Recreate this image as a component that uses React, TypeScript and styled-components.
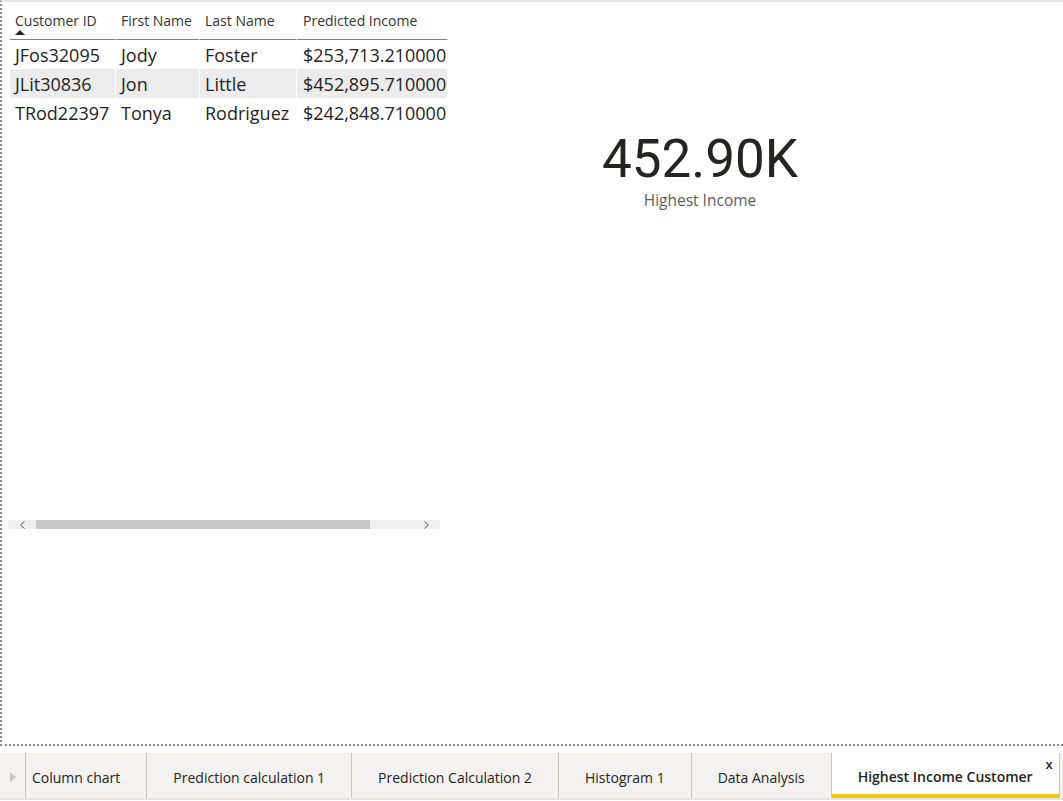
import React from "react";
import styled, { createGlobalStyle } from "styled-components";

const Global = createGlobalStyle`
  html, body { margin: 0; padding: 0; background: #ffffff; overflow: hidden; }
  body { font-family: "Open Sans", "Noto Sans", sans-serif; color: #252423; }
  * { box-sizing: border-box; }
`;

const Page = styled.div`
  width: 1063px;
  height: 801px;
  display: flex;
  flex-direction: column;
`;

const Canvas = styled.div`
  height: 746px;
  flex-shrink: 0;
  border-top: 2px solid #e6e6e6;
  border-left: 2px dotted #8a8a8a;
  border-bottom: 2px dotted #8a8a8a;
  display: flex;
  padding: 6px 0 0 8px;
`;

const TableVisual = styled.div`
  width: 438px;
  display: flex;
  flex-direction: column;
`;

const TableArea = styled.div`
  height: 504px;
  overflow: hidden;
  width: 438px;
`;

const Row = styled.div<{ $shade?: boolean }>`
  display: grid;
  grid-template-columns: 106px 84px 97px 151px;
  height: 29px;
  background: ${(p) => (p.$shade ? "#ececec" : "transparent")};
`;

const HeadRow = styled.div`
  display: grid;
  grid-template-columns: 106px 84px 97px 151px;
  height: 32px;
`;

const HeadCell = styled.div<{ $pad?: number }>`
  position: relative;
  border-right: 1px solid #ffffff;
  border-bottom: 1px solid #3b8fe0;
  padding: 3px 0 0 ${(p) => p.$pad ?? 5}px;
  font-size: 14px;
  color: #333333;
  white-space: nowrap;
  overflow: hidden;
`;

const Cell = styled.div<{ $pad?: number }>`
  border-right: 1px solid #ffffff;
  padding: 1px 0 0 ${(p) => p.$pad ?? 5}px;
  font-size: 18px;
  line-height: 28px;
  color: #252423;
  white-space: nowrap;
  overflow: hidden;
`;

const SortArrow = styled.span`
  position: absolute;
  left: 5px;
  top: 22px;
  width: 0;
  height: 0;
  border-left: 5px solid transparent;
  border-right: 5px solid transparent;
  border-bottom: 5px solid #252423;
`;

const ScrollBar = styled.div`
  margin-top: 8px;
  margin-left: -2px;
  width: 432px;
  height: 9px;
  background: #f0f0f0;
  display: flex;
  align-items: center;
`;

const ScrollArrow = styled.div`
  width: 28px;
  display: flex;
  justify-content: center;
  align-items: center;
`;

const Thumb = styled.div`
  width: 334px;
  height: 9px;
  background: #c8c8c8;
`;

const ThumbSpacer = styled.div`
  flex: 1;
`;

const Kpi = styled.div`
  width: 504px;
  display: flex;
  flex-direction: column;
  align-items: center;
  padding-top: 121px;
`;

const KpiValue = styled.div`
  font-family: Roboto, "DejaVu Sans", sans-serif;
  font-size: 53px;
  line-height: 60px;
  color: #252423;
`;

const KpiLabel = styled.div`
  font-size: 15.5px;
  color: #605e5c;
  margin-top: 0px;
`;

const TabBar = styled.div`
  margin-top: 7px;
  height: 47px;
  flex-shrink: 0;
  background: #f3f2f1;
  border-bottom: 2px solid #e6e4e2;
  display: flex;
  align-items: stretch;
`;

const Scroller = styled.div`
  width: 26px;
  flex-shrink: 0;
  border-right: 1px solid #c8c6c4;
  display: flex;
  align-items: center;
  justify-content: center;
  padding-top: 3px;
`;

const Tab = styled.div<{ $active?: boolean; $first?: boolean }>`
  position: relative;
  flex-shrink: 0;
  display: flex;
  align-items: center;
  padding: 3px 26px 0 ${(p) => (p.$first ? 6 : 26)}px;
  border-right: 1px solid #c8c6c4;
  background: ${(p) => (p.$active ? "#ffffff" : "transparent")};
  font-size: 14px;
  font-weight: ${(p) => (p.$active ? 600 : 400)};
  color: #252423;
  white-space: nowrap;
  ${(p) => (p.$active ? "border-bottom: 4px solid #f2c811; padding-top: 6px; padding-right: 26px;" : "")}
`;

const Close = styled.span`
  position: absolute;
  right: 6px;
  top: 2px;
  font-size: 13px;
  font-weight: 600;
  color: #252423;
`;

const rows = [
  ["JFos32095", "Jody", "Foster", "$253,713.2100000000"],
  ["JLit30836", "Jon", "Little", "$452,895.7100000000"],
  ["TRod22397", "Tonya", "Rodriguez", "$242,848.7100000000"],
];

const tabs = [
  "Column chart",
  "Prediction calculation 1",
  "Prediction Calculation 2",
  "Histogram 1",
  "Data Analysis",
];

export default function App() {
  return (
    <Page>
      <Global />
      <Canvas>
        <TableVisual>
          <TableArea>
            <HeadRow>
              <HeadCell>
                Customer ID
                <SortArrow />
              </HeadCell>
              <HeadCell>First Name</HeadCell>
              <HeadCell>Last Name</HeadCell>
              <HeadCell $pad={6}>Predicted Income</HeadCell>
            </HeadRow>
            {rows.map((r, i) => (
              <Row key={r[0]} $shade={i === 1}>
                <Cell>{r[0]}</Cell>
                <Cell>{r[1]}</Cell>
                <Cell>{r[2]}</Cell>
                <Cell $pad={6}>{r[3]}</Cell>
              </Row>
            ))}
          </TableArea>
          <ScrollBar>
            <ScrollArrow>
              <svg width="7" height="8" viewBox="0 0 7 8">
                <path d="M5.5 0.5 L1.5 4 L5.5 7.5" fill="none" stroke="#555" strokeWidth="1" />
              </svg>
            </ScrollArrow>
            <Thumb />
            <ThumbSpacer />
            <ScrollArrow>
              <svg width="7" height="8" viewBox="0 0 7 8">
                <path d="M1.5 0.5 L5.5 4 L1.5 7.5" fill="none" stroke="#555" strokeWidth="1" />
              </svg>
            </ScrollArrow>
          </ScrollBar>
        </TableVisual>
        <Kpi>
          <KpiValue>452.90K</KpiValue>
          <KpiLabel>Highest Income</KpiLabel>
        </Kpi>
      </Canvas>
      <TabBar>
        <Scroller>
          <svg width="6" height="10" viewBox="0 0 6 10">
            <path d="M0 0 L6 5 L0 10 Z" fill="#c8c6c4" />
          </svg>
        </Scroller>
        {tabs.map((t, i) => (
          <Tab key={t} $first={i === 0}>
            {t}
          </Tab>
        ))}
        <Tab $active>
          Highest Income Customer
          <Close>x</Close>
        </Tab>
      </TabBar>
    </Page>
  );
}
